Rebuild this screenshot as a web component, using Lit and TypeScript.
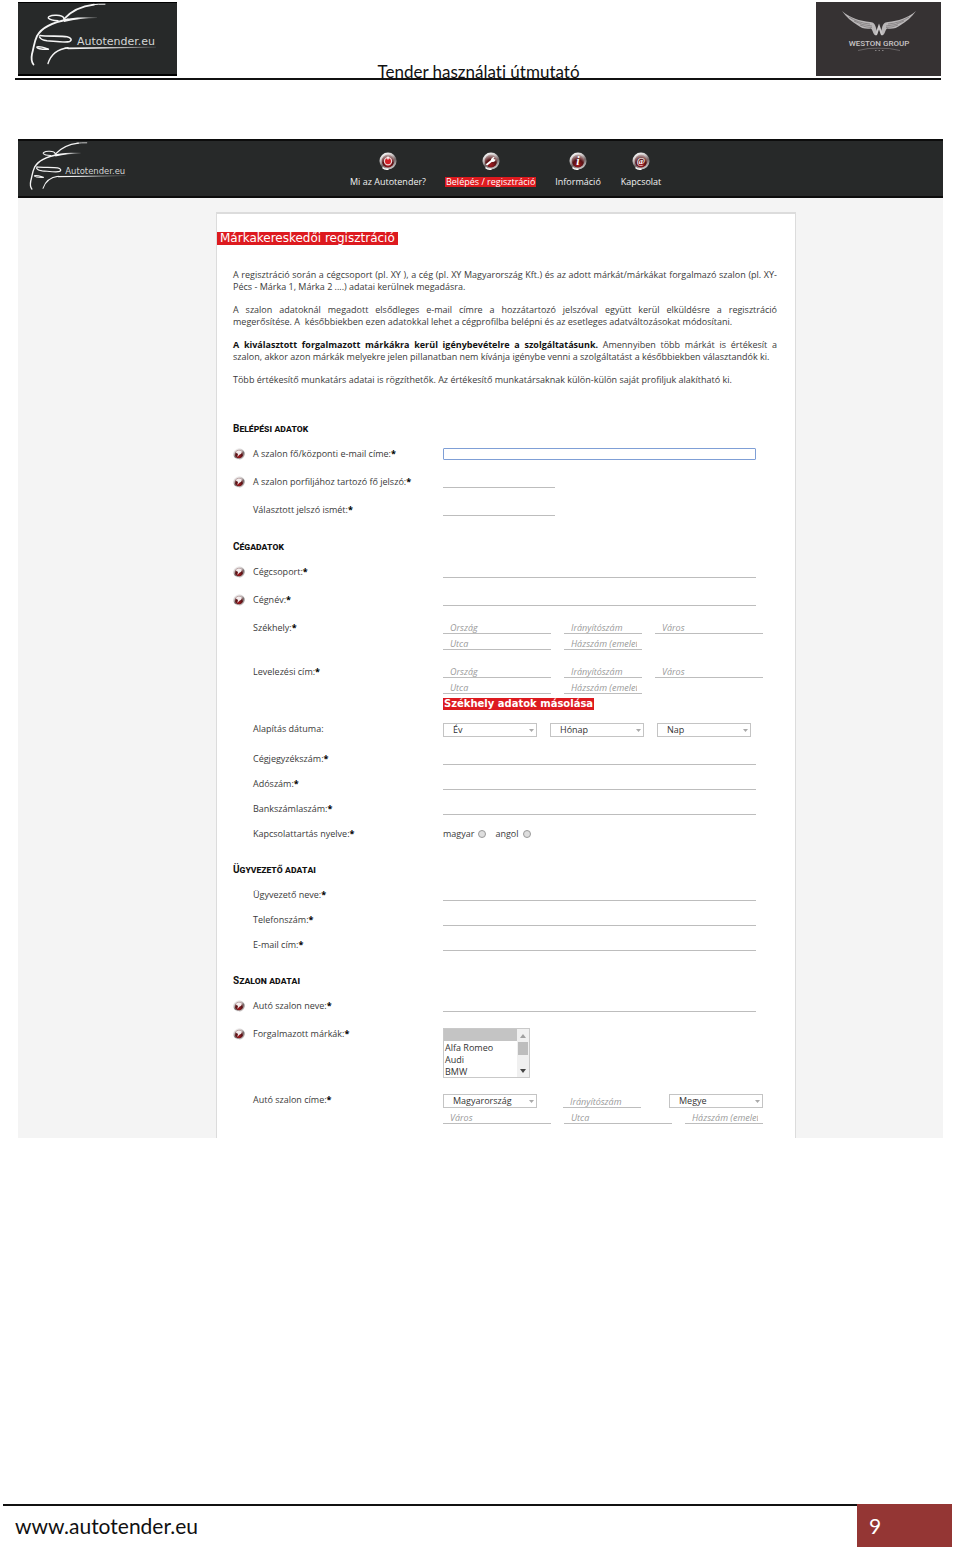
import { LitElement, html, svg, css, nothing } from "lit";
import { customElement, property } from "lit/decorators.js";

@customElement("car-logo")
class CarLogo extends LitElement {
  static styles = css`
    :host { display: block; }
    svg { display: block; width: 100%; height: 100%; }
    .line { fill: none; stroke: #f4f4f4; stroke-linecap: round; stroke-linejoin: round; }
    .name { fill: #d4d6d6; font-family: "DejaVu Sans", sans-serif; font-size: 11px; }
  `;
  render() {
    return html`<svg viewBox="0 0 159 74" role="img" aria-label="Autotender.eu">
      <defs>
        <linearGradient id="fade" x1="0" x2="1" y1="0" y2="0">
          <stop offset="0.4" stop-color="#f4f4f4" /><stop offset="1" stop-color="#f4f4f4" stop-opacity="0.15" />
        </linearGradient>
      </defs>
      <path class="line" stroke-width="1.8" d="M46 17C54 8 64 4 76 2.6" />
      <path class="line" stroke-width="1" d="M74 2.8Q80 2 87 2.2" />
      <path class="line" stroke-width="1.4" d="M46 16.500C45 13.500 42 13 37 13.300C32 13.500 29.500 15 30.500 16.300C32 18 35 18.500 40 18.800" />
      <path class="line" stroke-width="1.800" d="M50 17.500C36 20 24 25 19 34C16 40 16 45 14 52C13 57 13.500 60 15.500 62.500" />
      <path d="M46 17.300C57 15.200 68 15.200 79 15.300L79 16C68 16.200 57 17 46 20Z" fill="url(#fade)" />
      <path class="line" stroke-width="1.6" d="M22 33.500C28 34.500 44 33.800 49 34.800C53 35.800 54.500 38 51.500 39.500C48 41 37 39.300 29 38.700C25 38.300 22.500 37 21.500 35" />
      <path class="line" stroke-width="1.4" d="M30.500 47.300C27 45.500 21 44.200 19 45C18 46.500 23 47.500 30.500 47.300" />
      <path class="line" stroke-width="1.4" d="M30 61.500C33 52 39 47 50 45.700" />
      <path d="M46 45.500L138 44.800L138 45.600L50 47.200Z" fill="url(#fade)" />
      <text class="name" x="59" y="43">Autotender.eu</text>
    </svg>`;
  }
}

@customElement("weston-logo")
class WestonLogo extends LitElement {
  static styles = css`
    :host { display: block; background: #363233; }
    svg { display: block; width: 100%; height: 100%; }
    .name { fill: #c9c5c6; font-family: Roboto, sans-serif; font-size: 8px; font-weight: 500; text-anchor: middle; }
  `;
  render() {
    const wing = svg`
      <path d="M26 9C34 16 44 19 54 20C58 20.500 59 22 60 26L61.500 31L60 33.500C57 33 57 28 55 26.500C50 27.500 45 26 42 23.500C36 20 30 15 26 9Z" fill="#b9b6b7" />
      <path d="M33 15Q42 21 54 22M38 19Q46 23.500 56 24M44 23Q50 25.500 56 25.500" fill="none" stroke="#6b6768" stroke-width="0.6" />`;
    return html`<svg viewBox="0 0 125 74" role="img" aria-label="Weston Group">
      <g>${wing}</g>
      <g transform="translate(126 0) scale(-1 1)">${wing}</g>
      <path d="M60 33L63 24.500L66 33" fill="none" stroke="#c9c6c7" stroke-width="2" />
      <text class="name" x="63" y="44">WESTON GROUP</text>
      <path d="M42 48.500Q52 45.800 62 46.200Q74 45.800 84 48.500" fill="none" stroke="#7d797a" stroke-width="0.7" />
      <path d="M59 48.500h1.500M62.500 48.500h1.500M66 48.500h1.500" stroke="#858182" stroke-width="1" />
    </svg>`;
  }
}

@customElement("round-icon")
class RoundIcon extends LitElement {
  @property() kind = "power";
  static styles = css`
    :host { display: block; width: 18px; height: 18px; }
    svg { display: block; width: 100%; height: 100%; }
    .sign { fill: #fff; font-family: "Liberation Serif", serif; font-weight: bold; text-anchor: middle; }
  `;
  private glyph() {
    switch (this.kind) {
      case "power":
        return svg`<circle cx="9" cy="9.300" r="3.600" fill="#d32027" stroke="#f0d6d6" stroke-width="1.200" /><path d="M9 4.500v3" stroke="#fff" stroke-width="1.300" />`;
      case "wrench":
        return svg`<path d="M5 12.500L10 8.500" stroke="#fff" stroke-width="2" stroke-linecap="round" /><path d="M9 9.500C8.500 6.500 10.500 5 12.500 5L11.500 7L13.500 7.500C13.500 9.500 11.500 10.500 9 9.500Z" fill="#fff" />`;
      case "info":
        return svg`<text class="sign" x="9" y="13" font-size="12" font-style="italic">i</text>`;
      case "at":
        return svg`<text class="sign" x="9" y="12" font-size="9">@</text>`;
      default:
        return svg`<path d="M4 6.500C6 3.500 10.500 3 13 5C13.500 8 12 9.500 9.500 10L6.500 13.500L7.500 9Z" fill="#f4eeee" />`;
    }
  }
  render() {
    return html`<svg viewBox="0 0 18 18" aria-hidden="true">
      <defs>
        <linearGradient id="rim" x1="0.200" y1="0" x2="0.700" y2="1">
          <stop offset="0" stop-color="#fff" /><stop offset="0.350" stop-color="#c9c4c4" />
          <stop offset="0.600" stop-color="#6f6566" /><stop offset="1" stop-color="#d8d4d4" />
        </linearGradient>
        <radialGradient id="core" cx="0.500" cy="0.800" r="0.800">
          <stop offset="0" stop-color="#a3191f" /><stop offset="0.500" stop-color="#571316" /><stop offset="1" stop-color="#c3b2b2" />
        </radialGradient>
      </defs>
      <circle cx="9" cy="9" r="8.500" fill="url(#rim)" />
      <circle cx="9" cy="9" r="6.400" fill="url(#core)" />
      <path d="M3.500 15.500Q6 17.800 9.500 17" stroke="#fff" stroke-width="1.500" fill="none" />
      ${this.glyph()}
    </svg>`;
  }
}

const NAV = [
  { kind: "power", text: "Mi az Autotender?", active: false },
  { kind: "wrench", text: "Belépés / regisztráció", active: true },
  { kind: "info", text: "Információ", active: false },
  { kind: "at", text: "Kapcsolat", active: false },
];

@customElement("app-root")
class AppRoot extends LitElement {
  static styles = css`
    :host {
      display: flex; flex-direction: column; min-height: 100vh; box-sizing: border-box;
      background: #fff; color: #3a3a3a; font-family: "Open Sans", Roboto, sans-serif; font-size: 9px; line-height: 12px;
    }
    * { box-sizing: border-box; }
    h1, h2, p, ul { margin: 0; padding: 0; }
    .doc-head {
      display: flex; justify-content: space-between; align-items: flex-end;
      margin: 0 19px 0 15px; padding: 2px 0 2px 3px; border-bottom: 2px solid #111;
    }
    .doc-logo { width: 159px; height: 74px; background: #272929; box-shadow: inset 0 1px #000, inset 0 -2px #000; }
    .weston { width: 125px; height: 74px; }
    .doc-title {
      font-family: Lato, sans-serif; font-size: 17px; line-height: 20px; font-variant-ligatures: none;
      color: #111; padding-right: 36px; margin-bottom: -6px;
    }
    .site { margin: 59px 17px 0 18px; background: #f4f4f4; }
    .bar {
      display: flex; align-items: flex-start; height: 59px;
      background: #272929; border-top: 2px solid #0c0c0c; border-bottom: 2px solid #0c0c0c;
    }
    .brand { flex: 0 0 331px; padding-left: 2px; }
    .brand car-logo { width: 122px; height: 57px; }
    .nav { display: flex; gap: 18px; list-style: none; padding-top: 11px; }
    .nav-link { display: flex; flex-direction: column; align-items: center; gap: 7px; color: #f1f1f1; text-decoration: none; }
    .nav-text { line-height: 10px; padding: 0 1px; white-space: nowrap; }
    .active { background: #dd1a1f; color: #fff; }
    .page { padding: 14px 147px 0 198px; }
    .card { background: #fff; border: 1px solid #dcdcdc; border-top-width: 2px; border-bottom: 0; padding-bottom: 6px; }
    .banner {
      display: block; width: fit-content; margin: 18px 0 24px; padding: 0 3px;
      background: #dd1a1f; color: #fff; font-family: "DejaVu Sans", sans-serif; font-weight: 400; font-size: 12px; line-height: 13px;
    }
    .intro { display: flex; flex-direction: column; gap: 11px; margin: 0 18px 36px 16px; }
    .full { display: block; text-align: justify; text-align-last: justify; }
    .intro b { color: #111; }
    .section { padding: 0 18px 0 16px; }
    .section + .section { margin-top: 16px; }
    .section-title { font-family: Roboto, sans-serif; font-size: 10px; line-height: 14px; margin-bottom: 4px; font-variant: small-caps; color: #111; font-weight: 700; }
    .row { display: grid; grid-template-columns: 20px 190px minmax(0, 1fr); padding: 8px 0; }
    .row.with-copy { padding-bottom: 5px; }
    .compact { padding-top: 2px; }
    .compact .row { padding: 6px 0 7px; }
    .row round-icon { width: 12px; height: 12px; }
    .label { grid-column: 2; }
    .star { color: #000; font-weight: 700; }
    .field { grid-column: 3; display: flex; flex-direction: column; align-items: flex-start; gap: 4px; }
    .line { display: flex; gap: 13px; align-items: flex-end; }
    .text {
      display: block; height: 12px; margin: 0; padding: 0 5px 0 7px; border: 0; border-bottom: 1px solid #bdbdbd;
      border-radius: 0; background: none; outline: none; font: inherit; line-height: 11px; color: #333;
    }
    .text::placeholder { color: #9a9a9a; font-style: italic; opacity: 1; }
    .text.focus { border: 1px solid #7f9fd6; border-radius: 1px; }
    .w-full { width: 313px; }
    .w-wide { width: 108px; }
    .w-short { width: 112px; }
    .w-small { width: 78px; }
    .text.apart { margin: 0 15px 0 13px; }
    .drop { display: grid; width: 94px; }
    .drop select {
      grid-area: 1 / 1; appearance: none; width: 100%; height: 14px; margin: 0; padding: 0 12px 0 9px;
      border: 1px solid #c4c4c4; border-radius: 0; background: #fff; color: #333; font: inherit; line-height: 12px;
    }
    .drop svg { grid-area: 1 / 1; justify-self: end; align-self: center; margin-right: 3px; width: 5px; height: 3px; pointer-events: none; }
    .copy {
      display: block; border: 0; margin: 0; padding: 0 1px; height: 12px; background: #dd1a1f; color: #fff;
      font-family: "DejaVu Sans", sans-serif; font-weight: 700; font-size: 10px; line-height: 12px;
    }
    .choice { display: flex; align-items: center; gap: 4px; }
    .choices { display: flex; gap: 9px; }
    .choice input { appearance: none; width: 8px; height: 8px; margin: 0; border: 1px solid #9a9a9a; border-radius: 50%; background: #dedede; }
    .list { display: flex; border: 1px solid #c9c9c9; height: 50px; width: 87px; }
    .list select {
      flex: 1; min-width: 0; height: 48px; margin: 0; padding: 0; border: 0; border-radius: 0; outline: none;
      overflow: hidden; scrollbar-width: none; background: #fff; color: #333; font: inherit;
    }
    .list option { height: 12px; min-height: 12px; padding: 0 1px; line-height: 12px; }
    .list option:checked { background: #c4c4c4 linear-gradient(#c4c4c4, #c4c4c4); }
    .list svg { width: 12px; height: 48px; flex: none; }
    .doc-foot { display: flex; margin: auto 8px 5px 3px; font-family: Lato, sans-serif; font-size: 21px; line-height: 24px; color: #111; }
    .foot-text { flex: 1; border-top: 2px solid #111; padding: 8px 0 9px 12px; }
    .foot-page { width: 95px; padding: 10px 0 9px 12px; background: #943634; color: #fff; }
  `;

  private text(id: string, width: string, hint = "", labelled = false) {
    return html`<input class="text ${width}" type="text" id=${id} placeholder=${hint} aria-label=${labelled ? nothing : hint} />`;
  }

  private drop(id: string, name: string, options: string[]) {
    return html`<div class="drop">
      <select id=${id} aria-label=${name}>${options.map((o) => html`<option>${o}</option>`)}</select>
      <svg viewBox="0 0 5 3" aria-hidden="true"><path d="M0 0H5L2.500 3Z" fill="#aaa" /></svg>
    </div>`;
  }

  private row(id: string, label: string, field: unknown, opts: { icon?: boolean; star?: boolean; cls?: string } = {}) {
    return html`<div class="row ${opts.cls ?? ""}">
      ${opts.icon ? html`<round-icon kind="help"></round-icon>` : nothing}
      <label class="label" for=${id}>${label}${opts.star === false ? nothing : html`<span class="star">*</span>`}</label>
      <div class="field">${field}</div>
    </div>`;
  }

  private address(id: string) {
    return html`
      <div class="line">${this.text(id, "w-wide", "Ország")}${this.text(id + "-zip", "w-small", "Irányítószám")}${this.text(id + "-city", "w-wide", "Város")}</div>
      <div class="line">${this.text(id + "-street", "w-wide", "Utca")}${this.text(id + "-no", "w-small", "Házszám (emelet, ajtó)")}</div>`;
  }

  render() {
    const full = (id: string) => this.text(id, "w-full", "", true);
    return html`
      <header class="doc-head">
        <car-logo class="doc-logo"></car-logo>
        <div class="doc-title">Tender használati útmutató</div>
        <weston-logo class="weston"></weston-logo>
      </header>

      <div class="site">
        <div class="bar">
          <div class="brand"><car-logo></car-logo></div>
          <nav><ul class="nav">
            ${NAV.map((n) => html`<li><a class="nav-link" href="#">
              <round-icon kind=${n.kind}></round-icon>
              <span class="nav-text ${n.active ? "active" : ""}">${n.text}</span>
            </a></li>`)}
          </ul></nav>
        </div>

        <main class="page"><form class="card">
          <h1 class="banner">Márkakereskedői regisztráció</h1>
          <div class="intro">
            <p><span class="full">A regisztráció során a cégcsoport (pl. XY ), a cég (pl. XY Magyarország Kft.) és az adott márkát/márkákat forgalmazó szalon (pl. XY-</span>
              Pécs - Márka 1, Márka 2 ....) adatai kerülnek megadásra.</p>
            <p><span class="full">A szalon adatoknál megadott elsődleges e-mail címre a hozzátartozó jelszóval együtt kerül elküldésre a regisztráció</span>
              megerősítése. A &nbsp;későbbiekben ezen adatokkal lehet a cégprofilba belépni és az esetleges adatváltozásokat módosítani.</p>
            <p><span class="full"><b>A kiválasztott forgalmazott márkákra kerül igénybevételre a szolgáltatásunk.</b> Amennyiben több márkát is értékesít a</span>
              szalon, akkor azon márkák melyekre jelen pillanatban nem kívánja igénybe venni a szolgáltatást a későbbiekben választandók ki.</p>
            <p>Több értékesítő munkatárs adatai is rögzíthetők. Az értékesítő munkatársaknak külön-külön saját profiljuk alakítható ki.</p>
          </div>

          <section class="section">
            <h2 class="section-title">Belépési adatok</h2>
            ${this.row("mail", "A szalon fő/központi e-mail címe:", this.text("mail", "w-full focus", "", true), { icon: true })}
            ${this.row("pass", "A szalon porfiljához tartozó fő jelszó:", html`<input class="text w-short" type="password" id="pass" />`, { icon: true })}
            ${this.row("pass2", "Választott jelszó ismét:", html`<input class="text w-short" type="password" id="pass2" />`)}
          </section>

          <section class="section">
            <h2 class="section-title">Cégadatok</h2>
            ${this.row("group", "Cégcsoport:", full("group"), { icon: true })}
            ${this.row("company", "Cégnév:", full("company"), { icon: true })}
            ${this.row("seat", "Székhely:", this.address("seat"))}
            ${this.row("post", "Levelezési cím:", html`${this.address("post")}<button class="copy" type="button">Székhely adatok másolása</button>`, { cls: "with-copy" })}
            ${this.row("year", "Alapítás dátuma:", html`<div class="line">${this.drop("year", "Év", ["Év"])}${this.drop("month", "Hónap", ["Hónap"])}${this.drop("day", "Nap", ["Nap"])}</div>`, { star: false })}
            <div class="compact">
              ${this.row("reg", "Cégjegyzékszám:", full("reg"))}
              ${this.row("tax", "Adószám:", full("tax"))}
              ${this.row("bank", "Bankszámlaszám:", full("bank"))}
              ${this.row("hu", "Kapcsolattartás nyelve:", html`<div class="choices">
                <label class="choice">magyar <input type="radio" name="lang" id="hu" /></label>
                <label class="choice">angol <input type="radio" name="lang" id="en" /></label>
              </div>`)}
            </div>
          </section>

          <section class="section">
            <h2 class="section-title">Ügyvezető adatai</h2>
            <div class="compact">
              ${this.row("boss", "Ügyvezető neve:", full("boss"))}
              ${this.row("phone", "Telefonszám:", full("phone"))}
              ${this.row("boss-mail", "E-mail cím:", full("boss-mail"))}
            </div>
          </section>

          <section class="section">
            <h2 class="section-title">Szalon adatai</h2>
            ${this.row("salon", "Autó szalon neve:", full("salon"), { icon: true })}
            ${this.row("brands", "Forgalmazott márkák:", html`<div class="list">
              <select id="brands" multiple size="4">
                <option selected>&nbsp;</option><option>Alfa Romeo</option><option>Audi</option><option>BMW</option>
              </select>
              <svg viewBox="0 0 12 48" aria-hidden="true">
                <rect width="12" height="48" fill="#f0f0f0" />
                <path d="M3 9H9L6 5Z" fill="#a0a0a0" /><rect x="1" y="13" width="10" height="13" fill="#bdbdbd" />
                <path d="M3 40H9L6 44Z" fill="#444" />
              </svg></div>`, { icon: true })}
            ${this.row("country", "Autó szalon címe:", html`
              <div class="line">${this.drop("country", "Ország", ["Magyarország"])}${this.text("s-zip", "w-small apart", "Irányítószám")}${this.drop("county", "Megye", ["Megye"])}</div>
              <div class="line">${this.text("s-city", "w-wide", "Város")}${this.text("s-street", "w-wide", "Utca")}${this.text("s-no", "w-small", "Házszám (emelet, ajtó)")}</div>`)}
          </section>
        </form></main>
      </div>

      <footer class="doc-foot">
        <div class="foot-text">www.autotender.eu</div>
        <div class="foot-page">9</div>
      </footer>
    `;
  }
}
